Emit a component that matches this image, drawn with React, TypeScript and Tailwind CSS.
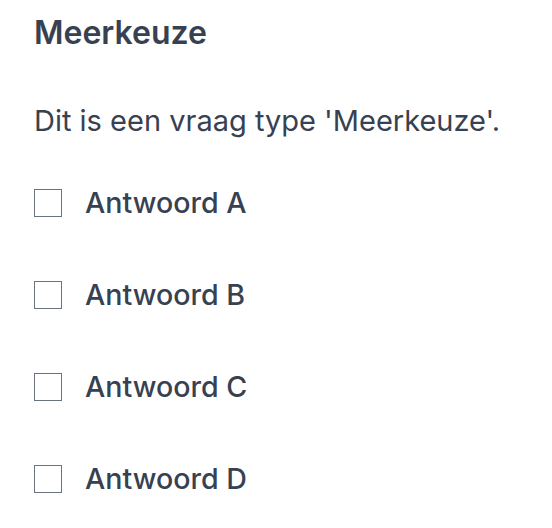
const options = ['Antwoord A', 'Antwoord B', 'Antwoord C', 'Antwoord D'];

export default function App() {
  return (
    <main className="min-h-screen bg-white px-[34px] pt-[13px] text-[#374151] font-['Inter',sans-serif]">
      <h2 className="text-[32px] font-semibold leading-[40px]">Meerkeuze</h2>
      <p className="mt-[48px] text-[29px] leading-[40px]">Dit is een vraag type 'Meerkeuze'.</p>
      <div className="mt-[48px] flex flex-col gap-[64px]">
        {options.map((label) => (
          <label key={label} className="flex items-center gap-[23px] h-[28px]">
            <span className="w-[28px] h-[28px] border-[1.5px] border-[#6b7280] bg-white shrink-0" />
            <span className="text-[28.6px] font-medium leading-[28px]">{label}</span>
          </label>
        ))}
      </div>
    </main>
  );
}
